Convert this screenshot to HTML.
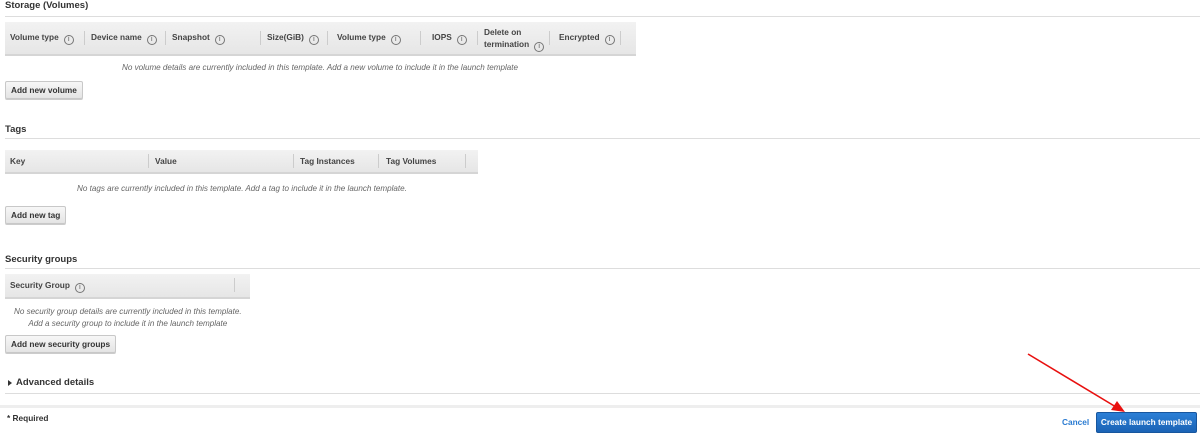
<!DOCTYPE html>
<html><head><style>
*{margin:0;padding:0;box-sizing:border-box}
body{width:1200px;height:438px;background:#fff;font-family:"Liberation Sans",Arial,sans-serif;color:#333;position:relative;overflow:hidden}
.a{position:absolute;white-space:nowrap}
.h{font-size:9.5px;font-weight:bold;color:#333}
.ln{position:absolute;left:5px;right:0;height:1px;background:#ddd}
.th{position:absolute;background:linear-gradient(#f2f2f2,#e6e6e6);border-bottom:2px solid #d5d5d5}
.c{position:absolute;font-size:8.3px;font-weight:bold;color:#444}
.d{position:absolute;top:6px;width:1px;height:14px;background:#ccc}
.i{display:inline-block;width:10px;height:10px;border:1px solid #777;border-radius:50%;font-size:7px;line-height:8px;text-align:center;font-weight:normal;margin-left:5px;vertical-align:-1px;color:#555}
.e{font-size:8.1px;font-style:italic;color:#666}
.b{position:absolute;height:18px;border:1px solid #c8c8c8;border-radius:2px;background:linear-gradient(#f7f7f7,#e4e4e4);font-size:8.3px;font-weight:bold;color:#333;padding:0 5px;line-height:16px;box-shadow:0 1px 0 #ccc}
</style></head><body>
<div class="a h" style="left:5px;top:0px">Storage (Volumes)</div>
<div class="ln" style="top:16px"></div>
<div class="th" style="left:5px;top:22px;width:631px;height:34px">
<div class="c" style="left:5px;top:10px">Volume type<span class="i">i</span></div>
<div class="d" style="left:79px;top:9px"></div>
<div class="c" style="left:86px;top:10px">Device name<span class="i">i</span></div>
<div class="d" style="left:160px;top:9px"></div>
<div class="c" style="left:167px;top:10px">Snapshot<span class="i">i</span></div>
<div class="d" style="left:255px;top:9px"></div>
<div class="c" style="left:262px;top:10px">Size(GiB)<span class="i">i</span></div>
<div class="d" style="left:322px;top:9px"></div>
<div class="c" style="left:332px;top:10px">Volume type<span class="i">i</span></div>
<div class="d" style="left:415px;top:9px"></div>
<div class="c" style="left:427px;top:10px">IOPS<span class="i">i</span></div>
<div class="d" style="left:472px;top:9px"></div>
<div class="c" style="left:479px;top:4px;line-height:12px">Delete on<br>termination<span class="i">i</span></div>
<div class="d" style="left:544px;top:9px"></div>
<div class="c" style="left:554px;top:10px">Encrypted<span class="i">i</span></div>
<div class="d" style="left:615px;top:9px"></div>
</div>
<div class="a e" style="left:122px;top:63px">No volume details are currently included in this template. Add a new volume to include it in the launch template</div>
<div class="b" style="left:5px;top:81px">Add new volume</div>

<div class="a h" style="left:5px;top:124px">Tags</div>
<div class="ln" style="top:138px"></div>
<div class="th" style="left:5px;top:150px;width:473px;height:24px">
<div class="c" style="left:5px;top:6px">Key</div>
<div class="d" style="left:143px;top:4px"></div>
<div class="c" style="left:150px;top:6px">Value</div>
<div class="d" style="left:288px;top:4px"></div>
<div class="c" style="left:295px;top:6px">Tag Instances</div>
<div class="d" style="left:373px;top:4px"></div>
<div class="c" style="left:381px;top:6px">Tag Volumes</div>
<div class="d" style="left:460px;top:4px"></div>
</div>
<div class="a e" style="left:77px;top:184px">No tags are currently included in this template. Add a tag to include it in the launch template.</div>
<div class="b" style="left:5px;top:206px">Add new tag</div>

<div class="a h" style="left:5px;top:254px">Security groups</div>
<div class="ln" style="top:268px"></div>
<div class="th" style="left:5px;top:274px;width:245px;height:25px">
<div class="c" style="left:5px;top:6px">Security Group<span class="i">i</span></div>
<div class="d" style="left:229px;top:4px"></div>
</div>
<div class="a e" style="left:14px;top:306px;text-align:center;line-height:12px">No security group details are currently included in this template.<br>Add a security group to include it in the launch template</div>
<div class="b" style="left:5px;top:335px">Add new security groups</div>

<div class="a" style="left:8px;top:380px;width:0;height:0;border-left:4px solid #333;border-top:3.5px solid transparent;border-bottom:3.5px solid transparent"></div>
<div class="a" style="left:16px;top:377px;font-size:9.5px;font-weight:bold;color:#333">Advanced details</div>
<div class="ln" style="top:393px"></div>
<div class="a" style="left:0;right:0;top:405px;height:3px;background:#eee"></div>
<div class="a" style="left:7px;top:413px;font-size:8.3px;font-weight:bold">* Required</div>
<div class="a" style="left:1062px;top:417px;font-size:8.3px;font-weight:bold;color:#2a7bd1">Cancel</div>
<div class="a" style="left:1096px;top:412px;width:101px;height:21px;background:linear-gradient(#2b7fd6,#1b63b5);border:1px solid #17569e;border-radius:2px;color:#fff;font-size:8.3px;font-weight:bold;line-height:19px;text-align:center">Create launch template</div>
<svg class="a" style="left:0;top:0" width="1200" height="438"><line x1="1028" y1="354" x2="1116" y2="407" stroke="#e8100f" stroke-width="1.6"/><polygon points="1125,412 1111,410 1117,401" fill="#e8100f"/></svg>
</body></html>
